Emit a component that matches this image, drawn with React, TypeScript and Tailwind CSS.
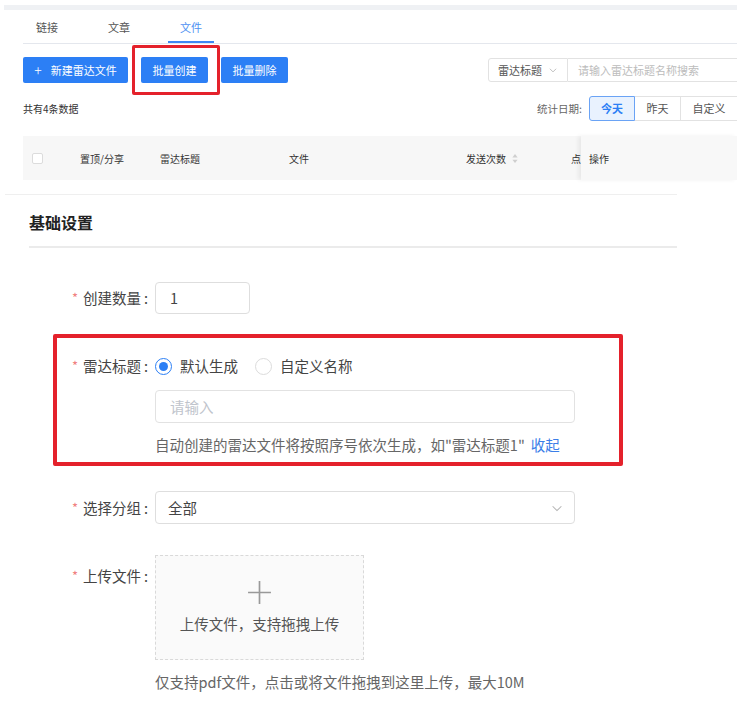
import React from "react";

const tabs = [
  { key: "link", label: "链接", active: false },
  { key: "article", label: "文章", active: false },
  { key: "file", label: "文件", active: true },
];

const dateOptions = ["今天", "昨天", "自定义"];

function Required({ children }: { children: React.ReactNode }) {
  return (
    <span className="flex items-center justify-end">
      <span className="mr-[5px] text-[13px] text-[#f08080]">*</span>
      <span>{children}</span>
      <span className="ml-[3px]">:</span>
    </span>
  );
}

function ChevronDown({ className }: { className?: string }) {
  return (
    <svg viewBox="0 0 16 16" className={className} fill="none" stroke="currentColor" strokeWidth="1.2">
      <path d="M3 6l5 5 5-5" />
    </svg>
  );
}

function SortIcon() {
  return (
    <svg viewBox="0 0 8 14" className="h-[11px] w-[6px] text-[#cfcfcf]" fill="currentColor">
      <path d="M4 1L7.5 5.5H0.5z" />
      <path d="M4 13L0.5 8.5H7.5z" />
    </svg>
  );
}

export default function App() {
  return (
    <div
      className="relative h-[705px] w-[737px] overflow-hidden bg-white text-[#333]"
      style={{ fontFamily: '"Noto Sans CJK SC", "Noto Sans", sans-serif' }}
    >
      {/* list page snapshot */}
      <div className="h-[189px]">
        <div className="ml-[4px] mt-[5px] h-[5px] bg-[#eff1f4]" />

        <div className="ml-[23px] flex h-[34px] items-end gap-[26px] border-b border-[#e4e7ed] pl-[1px]">
          {tabs.map((tab) => (
            <div
              key={tab.key}
              className={`flex h-[34px] w-[46px] items-center justify-center pt-[5px] text-[11px] ${
                tab.active
                  ? "border-b-2 border-[#3d86f3] text-[#4f91f2]"
                  : "border-b-2 border-transparent text-[#555]"
              }`}
            >
              {tab.label}
            </div>
          ))}
        </div>

        <div className="mt-[13px] flex h-[26px] items-center pl-[23px]">
          <button className="flex h-[26px] w-[105px] items-center justify-center gap-[9px] rounded-[2px] bg-[#2c7ff5] text-[11px] text-white">
            <span className="text-[14px] font-light leading-none">+</span>
            新建雷达文件
          </button>
          <div className="relative ml-[13px]">
            <button className="flex h-[26px] w-[67px] items-center justify-center rounded-[2px] bg-[#2c7ff5] text-[11px] text-white">
              批量创建
            </button>
            <div className="absolute -bottom-[12px] -left-[9px] -right-[12px] -top-[12px] rounded-[2px] border-[3px] border-[#e4212b]" />
          </div>
          <button className="ml-[13px] flex h-[26px] w-[67px] items-center justify-center rounded-[2px] bg-[#2c7ff5] text-[11px] text-white">
            批量删除
          </button>

          <div className="ml-auto flex h-[24px] items-stretch">
            <div className="flex w-[80px] items-center justify-between rounded-l-[3px] border border-[#e2e2e2] pl-[9px] pr-[9px] text-[11px] text-[#555]">
              雷达标题
              <ChevronDown className="h-[10px] w-[10px] text-[#aaa]" />
            </div>
            <div className="flex w-[169px] items-center border-y border-[#e2e2e2] pl-[10px] text-[11px] text-[#bcbcbc]">
              请输入雷达标题名称搜索
            </div>
          </div>
        </div>

        <div className="mt-[13px] flex h-[25px] items-center pl-[23px]">
          <span className="text-[10px] text-[#333]">共有4条数据</span>
          <span className="ml-auto mr-[7px] text-[10.5px] text-[#666]">统计日期:</span>
          <div className="flex h-[25px]">
            {dateOptions.map((d, i) => (
              <div
                key={d}
                className={`flex items-center justify-center text-[11px] ${
                  i === 0
                    ? "w-[46px] rounded-l-[3px] border border-[#6aa3f5] bg-[#e9f2fe] font-bold text-[#2c7ff5]"
                    : i === 1
                      ? "w-[46px] border-y border-r border-[#e2e2e2] text-[#555]"
                      : "w-[56px] border-y border-[#e2e2e2] text-[#555]"
                }`}
              >
                {d}
              </div>
            ))}
          </div>
        </div>

        <div className="ml-[23px] mt-[15px] flex h-[44px] items-center bg-[#f7f7f7] text-[10px] text-[#333]">
          <div className="w-[57px] pl-[9px]">
            <div className="h-[11px] w-[11px] rounded-[2px] border border-[#dcdcdc] bg-white" />
          </div>
          <div className="w-[80px]">置顶/分享</div>
          <div className="w-[129px]">雷达标题</div>
          <div className="w-[177px]">文件</div>
          <div className="flex w-[105px] items-center gap-[6px]">
            发送次数
            <SortIcon />
          </div>
          <div className="w-[10px]">点</div>
          <div className="flex h-full flex-1 items-center bg-[#f8f8f8] pl-[8px] shadow-[-3px_0_4px_rgba(0,0,0,0.06)]">
            操作
          </div>
        </div>
      </div>

      {/* batch create form snapshot */}
      <div className="ml-[5px] w-[672px] border-t border-[#efefef]">
        <div className="ml-[24px] flex h-[53px] items-end border-b-2 border-[#ebebeb] pb-[13px]">
          <h2 className="text-[16px] font-bold leading-[22px] text-[#222]">基础设置</h2>
        </div>
      </div>

      <div className="text-[14.5px] text-[#444]">
        <div className="mt-[34px] flex h-[32px] items-center">
          <div className="w-[155px] pr-[7px]">
            <Required>创建数量</Required>
          </div>
          <div className="flex h-[32px] w-[95px] items-center rounded-[4px] border border-[#dedede] pl-[14px] text-[#444]">
            1
          </div>
        </div>

        <div className="ml-[53px] mt-[20px] w-[570px] rounded-[2px] border-4 border-[#e4212b] pb-[7px] pt-[12px]">
          <div className="flex h-[32px] items-center">
            <div className="w-[98px] pr-[7px]">
              <Required>雷达标题</Required>
            </div>
            <div className="flex items-center">
              <span className="flex h-[17px] w-[17px] items-center justify-center rounded-full border border-[#2c7ff5] bg-white">
                <span className="h-[9px] w-[9px] rounded-full bg-[#2c7ff5]" />
              </span>
              <span className="ml-[8px]">默认生成</span>
              <span className="ml-[17px] h-[17px] w-[17px] rounded-full border border-[#dcdcdc] bg-white" />
              <span className="ml-[8px]">自定义名称</span>
            </div>
          </div>
          <div className="ml-[98px] mt-[8px] flex h-[33px] w-[420px] items-center rounded-[4px] border border-[#e2e2e2] pl-[14px] text-[#c0c4cc]">
            请输入
          </div>
          <div className="ml-[98px] mt-[12px] flex h-[20px] items-center text-[#666]">
            自动创建的雷达文件将按照序号依次生成，如"雷达标题1"
            <span className="ml-[6px] text-[#3b7ee8]">收起</span>
          </div>
        </div>

        <div className="mt-[25px] flex h-[33px] items-center">
          <div className="w-[155px] pr-[7px]">
            <Required>选择分组</Required>
          </div>
          <div className="flex h-[33px] w-[420px] items-center justify-between rounded-[4px] border border-[#dedede] pl-[12px] pr-[10px] text-[#444]">
            全部
            <ChevronDown className="h-[14px] w-[14px] text-[#b5b5b5]" />
          </div>
        </div>

        <div className="mt-[31px] flex items-start">
          <div className="w-[155px] pr-[7px] pt-[10px]">
            <Required>上传文件</Required>
          </div>
          <div>
            <div className="flex h-[105px] w-[209px] flex-col items-center justify-center border border-dashed border-[#d9d9d9] bg-[#fafafa] text-[#555]">
              <svg viewBox="0 0 24 24" className="h-[25px] w-[25px] text-[#999]" fill="none" stroke="currentColor" strokeWidth="1.6">
                <path d="M12 1v22M1 12h22" />
              </svg>
              <span className="mt-[8px]">上传文件，支持拖拽上传</span>
            </div>
            <div className="mt-[11px] text-[#666]">仅支持pdf文件，点击或将文件拖拽到这里上传，最大10M</div>
          </div>
        </div>
      </div>
    </div>
  );
}
